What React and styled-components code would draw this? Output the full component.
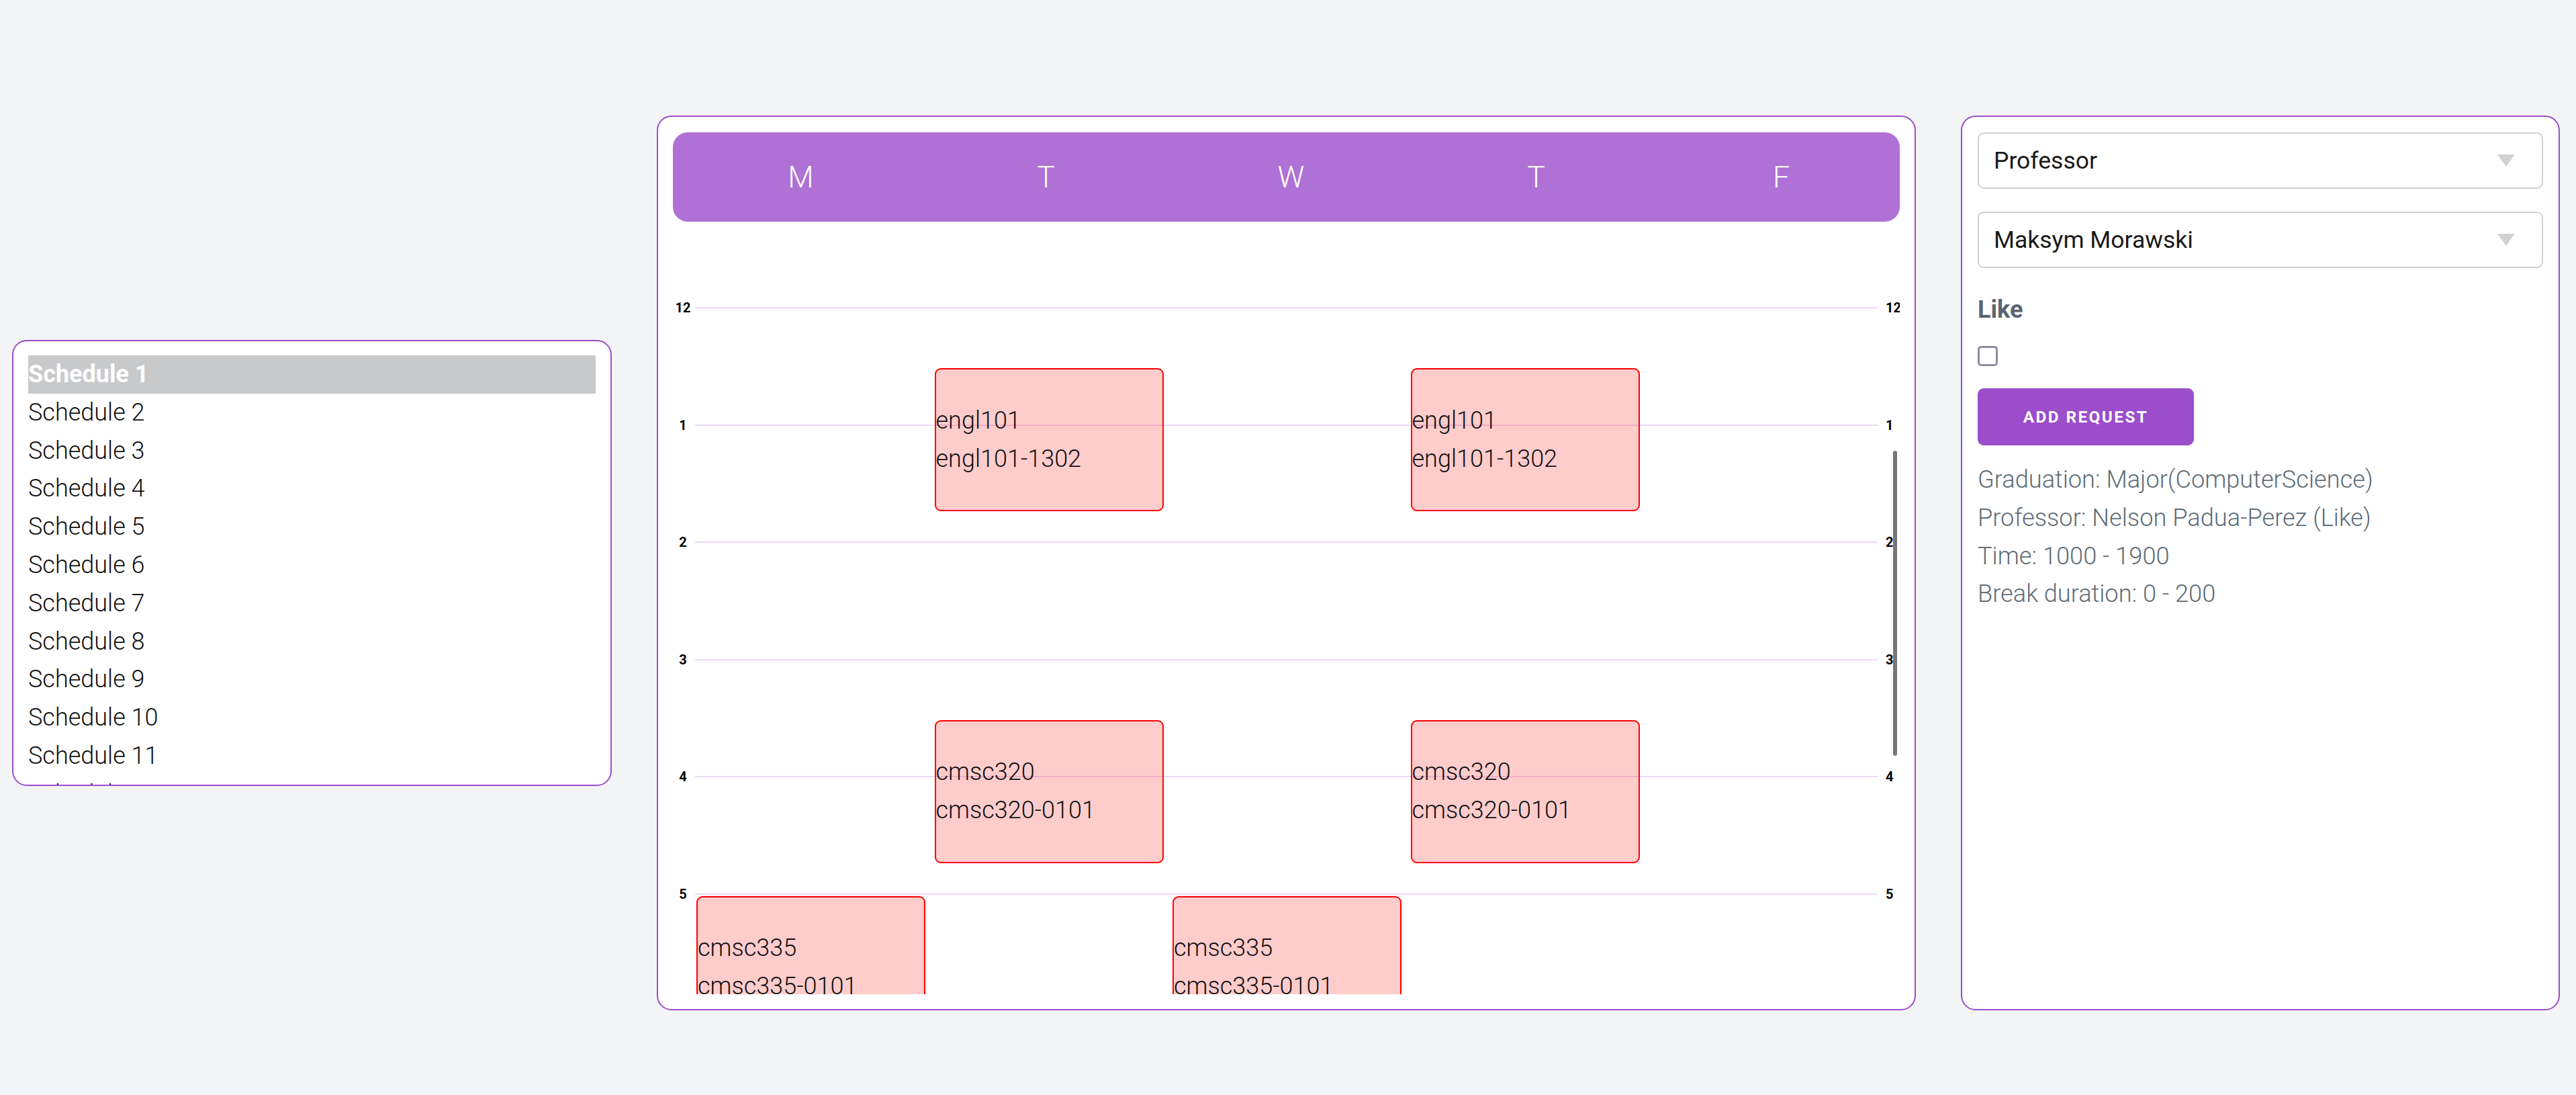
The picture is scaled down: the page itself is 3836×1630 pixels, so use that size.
import React from "react";
import styled, { createGlobalStyle } from "styled-components";

const HOUR = 174.5;
const FIRST_LINE = 128;
const COLUMN = 354.5;

const GlobalStyle = createGlobalStyle`
  html, body {
    margin: 0;
    padding: 0;
    background: #f3f4f6;
  }
  body {
    font-family: Roboto, "Liberation Sans", sans-serif;
    font-weight: 300;
    color: #606c76;
  }
  * { box-sizing: border-box; }
`;

const schedules = Array.from({ length: 14 }, (_, i) => `Schedule ${i + 1}`);
const days = ["M", "T", "W", "T", "F"];
const hours = [12, 1, 2, 3, 4, 5, 6];

const classes = [
  { day: 1, start: 12.5, name: "engl101", section: "engl101-1302" },
  { day: 3, start: 12.5, name: "engl101", section: "engl101-1302" },
  { day: 1, start: 15.5, name: "cmsc320", section: "cmsc320-0101" },
  { day: 3, start: 15.5, name: "cmsc320", section: "cmsc320-0101" },
  { day: 0, start: 17, name: "cmsc335", section: "cmsc335-0101" },
  { day: 2, start: 17, name: "cmsc335", section: "cmsc335-0101" },
];

const info = [
  "Graduation: Major(ComputerScience)",
  "Professor: Nelson Padua-Perez (Like)",
  "Time: 1000 - 1900",
  "Break duration: 0 - 200",
];

const App = () => {
  return (
    <>
      <GlobalStyle />
      <Page>
        {/* schedule picker */}
        <Panel width={893} height={664} pad="21px 22px 0">
          <ScheduleList>
            {schedules.map((s, i) => (
              <ScheduleItem key={s} active={i === 0}>
                {s}
              </ScheduleItem>
            ))}
          </ScheduleList>
        </Panel>

        {/* week calendar */}
        <Panel width={1875} height={1332} pad="23px 22px 22px">
          <DayHeader>
            {days.map((d, i) => (
              <Day key={i}>{d}</Day>
            ))}
          </DayHeader>
          <CalendarBody>
            <Track>
              {hours.map((h) => (
                <HourRow key={h}>
                  <HourLabel>{h}</HourLabel>
                  <HourLine />
                  <HourLabel right>{h}</HourLabel>
                </HourRow>
              ))}
            </Track>
            {classes.map((c, i) => (
              <ClassBlock
                key={i}
                style={{
                  left: 35 + c.day * COLUMN,
                  top: FIRST_LINE + (c.start - 12) * HOUR + 3,
                }}
              >
                <span>{c.name}</span>
                <span>{c.section}</span>
              </ClassBlock>
            ))}
            <ScrollThumb />
          </CalendarBody>
        </Panel>

        {/* request form */}
        <Panel width={892} height={1332} pad="23px">
          <SelectBox>
            Professor
            <Caret />
          </SelectBox>
          <SelectBox gap>
            Maksym Morawski
            <Caret />
          </SelectBox>
          <FieldLabel>Like</FieldLabel>
          <Check type="checkbox" />
          <AddButton>Add Request</AddButton>
          <InfoList>
            {info.map((t) => (
              <InfoLine key={t}>{t}</InfoLine>
            ))}
          </InfoList>
        </Panel>
      </Page>
    </>
  );
};

export default App;

const Page = styled.div`
  display: flex;
  align-items: center;
  gap: 67px;
  padding: 172px 0 0 18px;
`;

const Panel = styled.div`
  flex: none;
  width: ${(p) => p.width}px;
  height: ${(p) => p.height}px;
  padding: ${(p) => p.pad};
  background: #fff;
  border: 2px solid #9b4dca;
  border-radius: 22px;
  display: flex;
  flex-direction: column;
  overflow: hidden;
`;

const ScheduleList = styled.div`
  flex: 1;
  overflow: hidden;
`;

const ScheduleItem = styled.div`
  font-size: 36px;
  line-height: 56.8px;
  height: 56.8px;
  white-space: nowrap;
  color: ${(p) => (p.active ? "#fff" : "#111")};
  background: ${(p) => (p.active ? "#c8c9cb" : "transparent")};
  font-weight: ${(p) => (p.active ? 700 : 300)};
`;

const DayHeader = styled.div`
  flex: none;
  height: 133px;
  display: grid;
  grid-template-columns: repeat(5, 365px);
  align-items: center;
  padding-left: 8px;
  background: rgba(155, 77, 202, 0.8);
  border-radius: 22px;
`;

const Day = styled.div`
  text-align: center;
  color: #fff;
  font-size: 44.4px;
  font-weight: 300;
`;

const CalendarBody = styled.div`
  position: relative;
  flex: 1;
  overflow: hidden;
`;

const Track = styled.div`
  display: flex;
  flex-direction: column;
  padding-top: ${FIRST_LINE - HOUR / 2}px;
`;

const HourRow = styled.div`
  flex: none;
  height: ${HOUR}px;
  width: calc(100% + 9px);
  display: grid;
  grid-template-columns: 30px 1fr 30px;
  align-items: center;
`;

const HourLabel = styled.div`
  font-size: 20px;
  font-weight: 700;
  line-height: 1;
  color: #000;
  text-align: ${(p) => (p.right ? "left" : "center")};
`;

const HourLine = styled.div`
  height: 2px;
  margin: 0 12px 0 3px;
  background: rgba(155, 77, 202, 0.2);
`;

const ClassBlock = styled.div`
  position: absolute;
  width: 341px;
  height: 213px;
  border: 2px solid #ff0000;
  border-radius: 9px;
  background: rgba(255, 0, 0, 0.2);
  display: flex;
  flex-direction: column;
  justify-content: center;
  color: #111;
  font-size: 36px;
  line-height: 56.8px;
  white-space: nowrap;
`;

const ScrollThumb = styled.div`
  position: absolute;
  right: 4px;
  top: 341px;
  width: 6px;
  height: 454px;
  border-radius: 3px;
  background: #777;
`;

const SelectBox = styled.div`
  flex: none;
  height: 84px;
  margin-top: ${(p) => (p.gap ? "34px" : "0")};
  display: flex;
  align-items: center;
  justify-content: space-between;
  padding: 0 40px 0 22px;
  border: 2px solid #d1d1d1;
  border-radius: 9px;
  font-size: 35.5px;
  font-weight: 400;
  color: #1a1a1a;
`;

const Caret = styled.span`
  width: 0;
  height: 0;
  border-left: 13.5px solid transparent;
  border-right: 13.5px solid transparent;
  border-top: 18px solid #d1d1d1;
`;

const FieldLabel = styled.div`
  margin-top: 34px;
  font-size: 36px;
  line-height: 57px;
  font-weight: 700;
  color: #5b6571;
`;

const Check = styled.input`
  appearance: none;
  flex: none;
  width: 30px;
  height: 30px;
  margin: 25px 0 0 0;
  border: 3px solid #8f8e9c;
  border-radius: 5px;
  background: #fff;
`;

const AddButton = styled.button`
  flex: none;
  align-self: flex-start;
  margin-top: 33px;
  width: 322px;
  height: 85px;
  border: none;
  border-radius: 9px;
  background: #9b4dca;
  color: #fff;
  font-family: Roboto, "Liberation Sans", sans-serif;
  font-size: 24.4px;
  font-weight: 700;
  letter-spacing: 2.4px;
  text-transform: uppercase;
  cursor: pointer;
`;

const InfoList = styled.div`
  margin-top: 23px;
`;

const InfoLine = styled.div`
  font-size: 36.2px;
  line-height: 56.8px;
  color: #606c76;
  white-space: nowrap;
`;
